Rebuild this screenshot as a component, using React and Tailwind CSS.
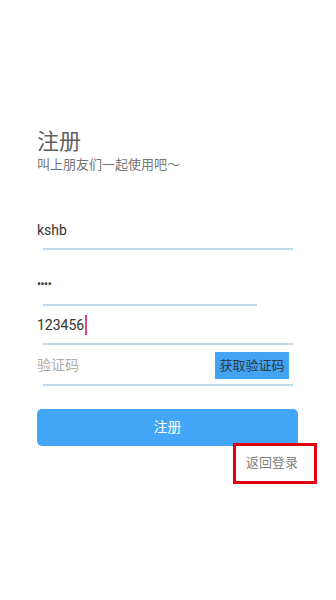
export default function App() {
  const font = { fontFamily: "Roboto, 'Noto Sans CJK SC', sans-serif" };
  return (
    <div className="w-[336px] h-[600px] bg-white overflow-hidden" style={font}>
      <div className="flex flex-col pl-[37px] pt-[129px]">
        <div className="text-[22px] leading-[26px] text-[#5f5f5f]">注册</div>
        <div className="mt-[2px] text-[13px] leading-[16px] text-[#757575]">叫上朋友们一起使用吧～</div>

        {/* username */}
        <div className="mt-[47px] h-[20px] flex items-center text-[14px] text-[#333]">kshb</div>
        <div className="mt-[8px] ml-[6px] w-[250px] h-[2px] bg-[#bcd8ea]" />

        {/* password */}
        <div className="mt-[24px] h-[20px] flex items-center text-[12px] tracking-[-0.5px] text-[#333]">••••</div>
        <div className="mt-[10px] ml-[6px] w-[214px] h-[2px] bg-[#bcd8ea]" />

        {/* phone */}
        <div className="mt-[9px] h-[20px] flex items-center text-[14px] text-[#333]">
          <span>123456</span>
          <span className="inline-block w-[2px] h-[20px] bg-[#e0457b] ml-[1px]" />
        </div>
        <div className="mt-[8px] ml-[6px] w-[250px] h-[2px] bg-[#bcd8ea]" />

        {/* code */}
        <div className="mt-[7px] h-[27px] w-[252px] flex items-center justify-between text-[14px]">
          <span className="text-[#ababab]">验证码</span>
          <span className="w-[74px] h-[27px] flex items-center justify-center bg-[#42a3f2] text-[13px] text-[#2f3a44]">获取验证码</span>
        </div>
        <div className="mt-[5px] ml-[6px] w-[250px] h-[2px] bg-[#bcd8ea]" />

        {/* register */}
        <div className="mt-[23px] w-[261px] h-[37px] rounded-[5px] bg-[#42a5f5] flex items-center justify-center text-[14px] text-white">注册</div>

        <div className="w-[261px] flex justify-end mt-[9px]">
          <div className="relative text-[13px] leading-[16px] text-[#808080]">
            返回登录
            <div className="absolute left-[-13px] right-[-19px] top-[-12px] bottom-[-13px] border-[3px] border-[#e3000f]" />
          </div>
        </div>
      </div>
    </div>
  );
}
